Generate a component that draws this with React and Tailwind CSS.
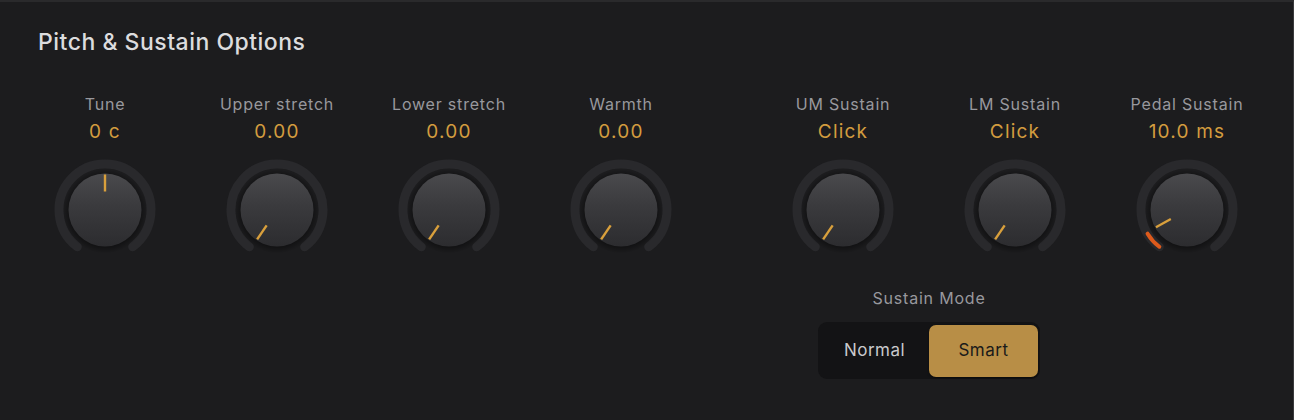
import React from "react";

const CX = 55;
const CY = 55;

function pt(r, a) {
  const rad = (a * Math.PI) / 180;
  return [CX + r * Math.sin(rad), CY - r * Math.cos(rad)];
}

function arc(r, a1, a2) {
  const [x1, y1] = pt(r, a1);
  const [x2, y2] = pt(r, a2);
  const large = a2 - a1 > 180 ? 1 : 0;
  return `M ${x1.toFixed(2)} ${y1.toFixed(2)} A ${r} ${r} 0 ${large} 1 ${x2.toFixed(2)} ${y2.toFixed(2)}`;
}

function Knob({ angle, fill, id }) {
  const [px1, py1] = pt(18.5, angle);
  const [px2, py2] = pt(35.5, angle);
  return (
    <svg width="110" height="110" viewBox="0 0 110 110">
      <defs>
        <linearGradient id={`g${id}`} x1="0" y1="0" x2="0" y2="1">
          <stop offset="0" stopColor="#4a4a4d" />
          <stop offset="0.45" stopColor="#3a3a3d" />
          <stop offset="1" stopColor="#2c2c2f" />
        </linearGradient>
        <radialGradient id={`s${id}`} cx="0.5" cy="0.5" r="0.5">
          <stop offset="0.8" stopColor="#000" stopOpacity="0.45" />
          <stop offset="1" stopColor="#000" stopOpacity="0" />
        </radialGradient>
      </defs>
      <path d={arc(46, -143, 143)} stroke="#29292c" strokeWidth="9" fill="none" strokeLinecap="round" />
      {fill && (
        <path d={arc(46, -143, -121)} stroke="#dd5a1c" strokeWidth="4" fill="none" strokeLinecap="round" />
      )}
      <circle cx={CX} cy={CY + 1.5} r="42" fill={`url(#s${id})`} />
      <circle cx={CX} cy={CY} r="36.5" fill={`url(#g${id})`} />
      <line x1={px1} y1={py1} x2={px2} y2={py2} stroke="#d9a03c" strokeWidth="2.4" strokeLinecap="butt" />
    </svg>
  );
}

function Control({ label, value, angle, fill, id }) {
  return (
    <div className="w-[172px] flex flex-col items-center">
      <div className="text-[16px] leading-[20px] tracking-[0.8px] text-[#98989d] whitespace-nowrap">{label}</div>
      <div className="mt-[7px] text-[19px] leading-[22px] tracking-[1.2px] text-[#d39c3f] whitespace-nowrap">{value}</div>
      <div className="mt-[12px]">
        <Knob angle={angle} fill={fill} id={id} />
      </div>
    </div>
  );
}

export default function App() {
  return (
    <div
      className="w-[1294px] h-[420px] bg-[#1c1c1e] border-t-2 border-[#2a2a2c] border-r border-r-[#3a3a3c] overflow-hidden"
      style={{ fontFamily: "Inter, 'Noto Sans', sans-serif" }}
    >
      <div className="pl-[38px] pt-[26px] text-[23px] leading-[28px] font-medium text-[#dcdcde] tracking-[0.5px]">
        Pitch &amp; Sustain Options
      </div>
      <div className="flex pl-[19px] mt-[38px]">
        <div className="flex">
          <Control id="a" label="Tune" value="0 c" angle={0} />
          <Control id="b" label="Upper stretch" value="0.00" angle={-146} />
          <Control id="c" label="Lower stretch" value="0.00" angle={-146} />
          <Control id="d" label="Warmth" value="0.00" angle={-146} />
        </div>
        <div className="ml-[50px] flex flex-col">
          <div className="flex">
            <Control id="e" label="UM Sustain" value="Click" angle={-146} />
            <Control id="f" label="LM Sustain" value="Click" angle={-146} />
            <Control id="g" label="Pedal Sustain" value="10.0 ms" angle={-119} fill />
          </div>
          <div className="w-[344px] flex flex-col items-center mt-[23px]">
            <div className="text-[16px] leading-[20px] tracking-[0.8px] text-[#98989d]">Sustain Mode</div>
            <div className="mt-[14px] w-[222px] h-[57px] rounded-[9px] bg-[#131315] flex items-center p-[2px] gap-0">
              <div className="flex-1 h-full flex items-center justify-center text-[17px] tracking-[0.5px] text-[#c9c9cc]">Normal</div>
              <div className="w-[109px] h-[52px] rounded-[7px] bg-[#b88e46] flex items-center justify-center text-[17px] tracking-[0.5px] text-[#1a1a1a] shadow-[0_1px_2px_rgba(0,0,0,0.5)]">
                Smart
              </div>
            </div>
          </div>
        </div>
      </div>
    </div>
  );
}
